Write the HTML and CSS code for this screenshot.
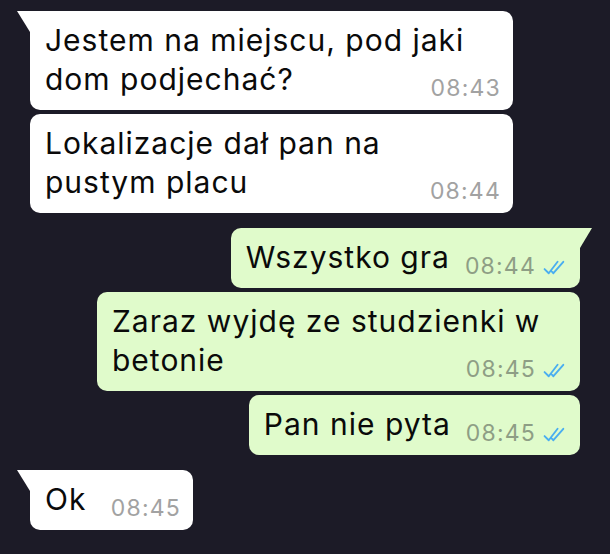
FILE: index.html
```html
<!DOCTYPE html>
<html lang="pl">

<head>
    <meta charset="utf-8">
    <title>Czat</title>
    <link rel="stylesheet" href="styles.css">
</head>

<body>
    <!--Chat thread-->
    <div class="chat">
        <div class="group">
            <div class="msg in tail">Jestem na miejscu, pod jaki dom podjechać?<span class="meta">08:43</span></div>
            <div class="msg in">Lokalizacje dał pan na pustym placu<span class="meta">08:44</span></div>
        </div>

        <div class="group right">
            <div class="msg out tail">Wszystko gra<span class="meta">08:44<svg class="ticks" viewBox="0 0 24 16"><path d="M1.5 9.5 L5.5 13.5 L14 2.5 M8.5 12 L10 13.5 L19.5 2.5" /></svg></span></div>
            <div class="msg out">Zaraz wyjdę ze studzienki w betonie<span class="meta">08:45<svg class="ticks" viewBox="0 0 24 16"><path d="M1.5 9.5 L5.5 13.5 L14 2.5 M8.5 12 L10 13.5 L19.5 2.5" /></svg></span></div>
            <div class="msg out">Pan nie pyta<span class="meta">08:45<svg class="ticks" viewBox="0 0 24 16"><path d="M1.5 9.5 L5.5 13.5 L14 2.5 M8.5 12 L10 13.5 L19.5 2.5" /></svg></span></div>
        </div>

        <div class="group">
            <div class="msg in tail">Ok&nbsp;<span class="meta">08:45</span></div>
        </div>
    </div>
</body>

</html>
```

FILE: styles.css
```css
/*global styling*/
* {
    box-sizing: border-box;
}

body {
    margin: 0;
    padding: 0;
    background-color: #1c1b27;
    font-family: "Inter", "Liberation Sans", sans-serif;
}

/*chat column*/
.chat {
    display: flex;
    flex-direction: column;
    gap: 15px;
    padding: 11px 30px 0 30px;
}

.group {
    display: flex;
    flex-direction: column;
    align-items: flex-start;
    gap: 4px;
}

.group.right {
    align-items: flex-end;
}

/*message bubble*/
.msg {
    position: relative;
    max-width: 483px;
    padding: 10px 32px 10px 15px;
    border-radius: 10px;
    font-size: 30px;
    line-height: 39px;
    letter-spacing: 1px;
    color: #0a0a0a;
}

.msg.in {
    background-color: #ffffff;
}

.msg.out {
    background-color: #e0fbcb;
}

/*time + ticks*/
.meta {
    float: right;
    display: flex;
    align-items: center;
    margin: 17px -20px 0 15px;
    font-size: 23px;
    line-height: 23px;
    letter-spacing: 1.2px;
    white-space: nowrap;
    color: #a2a2a2;
}

.msg.out .meta {
    color: #8e9e85;
}

.ticks {
    width: 25px;
    height: 17px;
    margin: 2px 0 0 7px;
    fill: none;
    stroke: #4aaef0;
    stroke-width: 1.8;
    stroke-linecap: round;
    stroke-linejoin: round;
}

/*bubble tails*/
.msg.in.tail {
    border-top-left-radius: 0;
}

.msg.out.tail {
    border-top-right-radius: 0;
}

.msg.tail::before {
    content: "";
    position: absolute;
    top: 0;
    width: 0;
    height: 0;
}

.msg.in.tail::before {
    left: -13px;
    border-top: 21px solid #ffffff;
    border-left: 13px solid transparent;
}

.msg.out.tail::before {
    right: -12px;
    border-top: 20px solid #e0fbcb;
    border-right: 12px solid transparent;
}
```
